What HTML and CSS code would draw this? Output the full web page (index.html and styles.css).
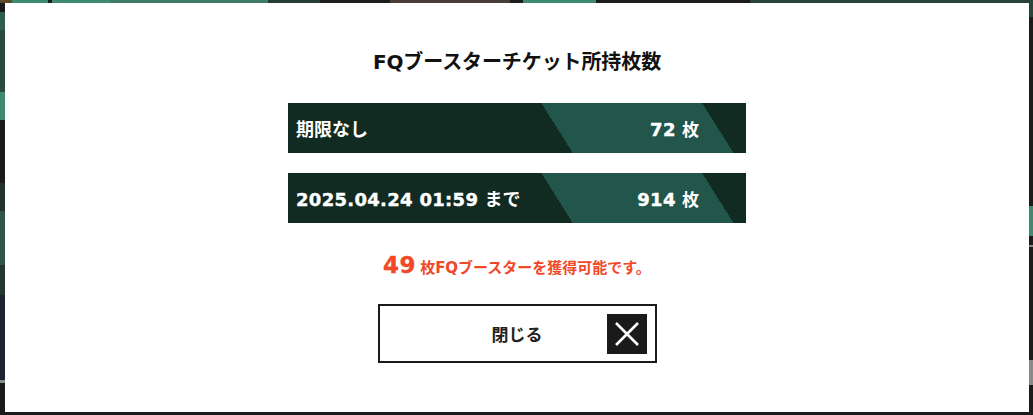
FILE: index.html
```html
<!DOCTYPE html>
<html lang="ja">
<head>
<meta charset="utf-8">
<title>FQブースターチケット所持枚数</title>
<link rel="stylesheet" href="styles.css">
</head>
<body>
<div class="backdrop">
  <div class="modal">
    <h2 class="modal-title">FQブースターチケット所持枚数</h2>
    <ul class="ticket-list">
      <li class="ticket-row">
        <span class="ticket-label">期限なし</span>
        <span class="ticket-count"><span class="num">72</span> <span class="unit">枚</span></span>
      </li>
      <li class="ticket-row">
        <span class="ticket-label"><span class="num">2025.04.24 01:59</span> まで</span>
        <span class="ticket-count"><span class="num">914</span> <span class="unit">枚</span></span>
      </li>
    </ul>
    <p class="notice"><span class="notice-num">49</span><span class="notice-text">枚FQブースターを獲得可能です。</span></p>
    <button class="close-btn" type="button">
      <span class="close-label">閉じる</span>
      <span class="close-icon">
        <svg width="26" height="26" viewBox="0 0 26 26"><path d="M2 2 L24 24 M24 2 L2 24" stroke="#fff" stroke-width="2.6" fill="none"/></svg>
      </span>
    </button>
  </div>
</div>
</body>
</html>
```
FILE: styles.css
```css
html, body {
  margin: 0;
  padding: 0;
  height: 100%;
}
body {
  background-color: #1b1b1b;
  background-image:
    linear-gradient(to right, #5a4a2a 0 12px, #3e8a6d 12px 48px, #1d1d1d 48px 52px, #3e8a6d 52px 110px, #3f7e66 110px 268px, #263d35 268px 320px, #1b1f1e 320px 390px, #4a3d35 390px 510px, #1d1d1d 510px 523px, #3e8a6d 523px 596px, #1b1b1b 596px 750px, #26443a 750px 100%),
    linear-gradient(to bottom, #4a3b22 0 3px, #1a1a1a 3px 12px, #2f5e4c 12px 30px, #2a4a3e 30px 92px, #3f8a6e 92px 120px, #1a1a1a 120px 183px, #23332c 183px 211px, #2e5548 211px 265px, #24382f 265px 295px, #1c2430 295px 380px, #8a8a8a 380px 383px, #1a1a1a 383px 100%),
    linear-gradient(to bottom, #26443a 0 17px, #1b1b1b 17px 206px, #3f8a6e 206px 236px, #1b1b1b 236px 245px, #888 245px 247px, #1b1b1b 247px 360px, #8a8a8a 360px 385px, #1b1b1b 385px 100%);
  background-size: 100% 3px, 5px 100%, 4px 100%;
  background-position: 0 0, 0 0, right 0 top 0;
  background-repeat: no-repeat;
  font-family: "DejaVu Sans", "Noto Sans CJK JP", sans-serif;
}
.backdrop {
  padding: 3px 4px 3px 5px;
  height: 100%;
  box-sizing: border-box;
}
.modal {
  background: #ffffff;
  height: 100%;
  box-sizing: border-box;
  display: flex;
  flex-direction: column;
  align-items: center;
  padding-top: 47px;
}
.modal-title {
  margin: 0;
  font-size: 20px;
  line-height: 24px;
  font-weight: 700;
  color: #111;
  letter-spacing: -0.1px;
}
.ticket-list {
  list-style: none;
  margin: 29px 0 0;
  padding: 0;
  width: 458px;
  display: flex;
  flex-direction: column;
  gap: 20px;
}
.ticket-row {
  height: 50px;
  box-sizing: border-box;
  display: flex;
  align-items: center;
  justify-content: space-between;
  padding: 0 47px 0 8px;
  color: #fff;
  font-weight: 700;
  font-size: 18px;
  background: linear-gradient(57.8deg, #112a22 0 241px, #22564a 241px 377px, #112a22 377px 100%);
}
.ticket-label .num,
.ticket-count .num {
  font-size: 18px;
  letter-spacing: 0.3px;
  -webkit-text-stroke: 0.4px #fff;
}
.ticket-count .unit {
  font-size: 17px;
}
.notice {
  margin: 30px 0 0;
  line-height: 24px;
  color: #f2482a;
  font-weight: 700;
  display: flex;
  align-items: baseline;
}
.notice-num {
  font-size: 23px;
  letter-spacing: 0.5px;
  margin-right: 4px;
  -webkit-text-stroke: 0.4px #f2482a;
}
.notice-text {
  font-size: 15px;
}
.close-btn {
  margin-top: 24px;
  width: 279px;
  height: 59px;
  box-sizing: border-box;
  border: 2px solid #1a1a1a;
  background: #fff;
  padding: 0 8px 0 0;
  display: grid;
  grid-template-columns: 1fr auto 1fr;
  align-items: center;
  font-family: "Noto Sans CJK JP", sans-serif;
  cursor: pointer;
}
.close-label {
  grid-column: 2;
  font-size: 17px;
  font-weight: 700;
  color: #222;
  padding-left: 8px;
}
.close-icon {
  grid-column: 3;
  justify-self: end;
  width: 40px;
  height: 40px;
  background: #1a1a1a;
  display: flex;
  align-items: center;
  justify-content: center;
}
.close-icon svg {
  display: block;
}
```
